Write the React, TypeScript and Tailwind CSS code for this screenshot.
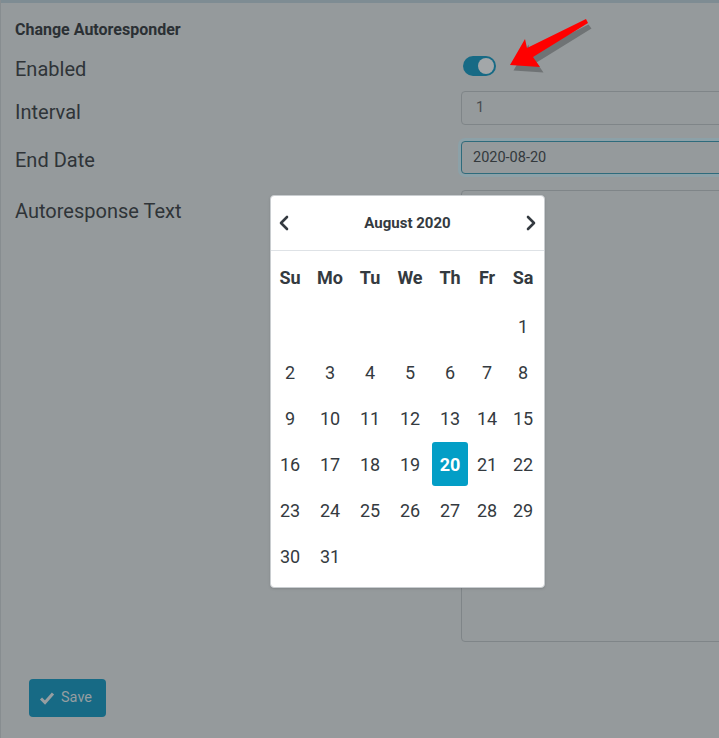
import { FC } from "react";

const font = { fontFamily: "Roboto, 'Liberation Sans', sans-serif" };

const weeks: (number | null)[][] = [
  [null, null, null, null, null, null, 1],
  [2, 3, 4, 5, 6, 7, 8],
  [9, 10, 11, 12, 13, 14, 15],
  [16, 17, 18, 19, 20, 21, 22],
  [23, 24, 25, 26, 27, 28, 29],
  [30, 31, null, null, null, null, null],
];

const dayNames = ["Su", "Mo", "Tu", "We", "Th", "Fr", "Sa"];

const Chevron: FC<{ dir: "left" | "right" }> = ({ dir }) => (
  <svg width="12" height="16" viewBox="0 0 12 16" fill="none">
    <polyline
      points={dir === "left" ? "9,2 3,8 9,14" : "3,2 9,8 3,14"}
      stroke="#343a40"
      strokeWidth="2.6"
      strokeLinecap="round"
      strokeLinejoin="round"
    />
  </svg>
);

const Calendar: FC = () => (
  <div className="absolute left-[269px] top-[195px] w-[275px] h-[393px] bg-white rounded-[4px] border border-[#c9cdd0] shadow-sm">
    <div className="h-[55px] flex items-center justify-between px-[7px] border-b border-[#dee2e6]">
      <Chevron dir="left" />
      <span className="text-[15px] font-bold text-[#343a40]">August 2020</span>
      <Chevron dir="right" />
    </div>
    <div className="-ml-[1px] grid grid-cols-[40px_40px_40px_40px_40px_34px_38px]">
      {dayNames.map((d) => (
        <div
          key={d}
          className="h-[52px] flex items-center justify-center text-[18px] font-bold text-[#343a40]"
        >
          {d}
        </div>
      ))}
      {weeks.flat().map((n, i) => (
        <div key={i} className="h-[46px] flex items-center justify-center">
          {n === 20 ? (
            <div className="w-[36px] h-[44px] rounded-[3px] bg-[#039ec6] flex items-center justify-center text-[18px] font-bold text-white">
              20
            </div>
          ) : (
            <span className="text-[18px] text-[#343a40]">{n ?? ""}</span>
          )}
        </div>
      ))}
    </div>
  </div>
);

const Arrow: FC = () => (
  <svg
    className="absolute left-[499px] top-[10px]"
    width="100"
    height="70"
    viewBox="500 10 100 70"
  >
    <polygon
      points="512,68 527,42 529,51 587,22 590,26 535,60 542,70"
      fill="#000"
      opacity="0.25"
      transform="translate(1.5,2.5)"
    />
    <polygon
      points="510,65 525,39 527,48 586,19 588,23 533,57 540,67"
      fill="#ff0000"
    />
  </svg>
);

const labelCls =
  "w-[446px] shrink-0 leading-[27px] text-[20px] text-[#2f3438]";

export default function App() {
  return (
    <div
      className="relative w-[719px] h-[738px] overflow-hidden bg-[#959a9c] border-l border-[#878d90]"
      style={font}
    >
      <div className="h-[3px] bg-[#7e8c93]" />
      <div className="pl-[14px] pt-[17px]">
        <div className="h-[20px] leading-[20px] text-[16px] font-bold text-[#2b3034]">
          Change Autoresponder
        </div>
        <div className="mt-[8px] flex items-start h-[43px]">
          <label className={`${labelCls} pt-[8px]`}>Enabled</label>
          <div className="shrink-0 mt-[8px] ml-[2px] w-[33px] h-[20px] rounded-full bg-[#176a85] flex items-center justify-end pr-[2px]">
            <div className="w-[16px] h-[16px] rounded-full bg-[#a3a7a9]" />
          </div>
        </div>
        <div className="flex items-start h-[50px]">
          <label className={`${labelCls} pt-[8px]`}>Interval</label>
          <div className="shrink-0 w-[300px] h-[34px] rounded-[4px] border border-[#7f8588] flex items-center px-[14px] text-[14.5px] text-[#474c50]">
            1
          </div>
        </div>
        <div className="flex items-start h-[49px]">
          <label className={`${labelCls} pt-[6px]`}>End Date</label>
          <div className="shrink-0 w-[300px] h-[33px] rounded-[4px] border border-[#2e6b7c] ring-[3px] ring-[#8ca1a8] flex items-center px-[11px] text-[14.5px] text-[#33393c]">
            2020-08-20
          </div>
        </div>
        <div className="flex items-start h-[452px]">
          <label className={`${labelCls} pt-[8px]`}>Autoresponse Text</label>
          <div className="shrink-0 w-[300px] h-[452px] rounded-[4px] border border-[#7f8588]" />
        </div>
        <button className="mt-[37px] ml-[14px] w-[77px] h-[38px] rounded-[4px] bg-[#176a85] flex items-center gap-[6px] pl-[10px] text-[14.5px] text-[#969ea1]">
          <svg width="16" height="14" viewBox="0 0 16 14">
            <polyline
              points="2,7.5 6,11.5 14,2.5"
              fill="none"
              stroke="#969ea1"
              strokeWidth="3"
              strokeLinejoin="miter"
            />
          </svg>
          Save
        </button>
      </div>
      <Calendar />
      <Arrow />
    </div>
  );
}
